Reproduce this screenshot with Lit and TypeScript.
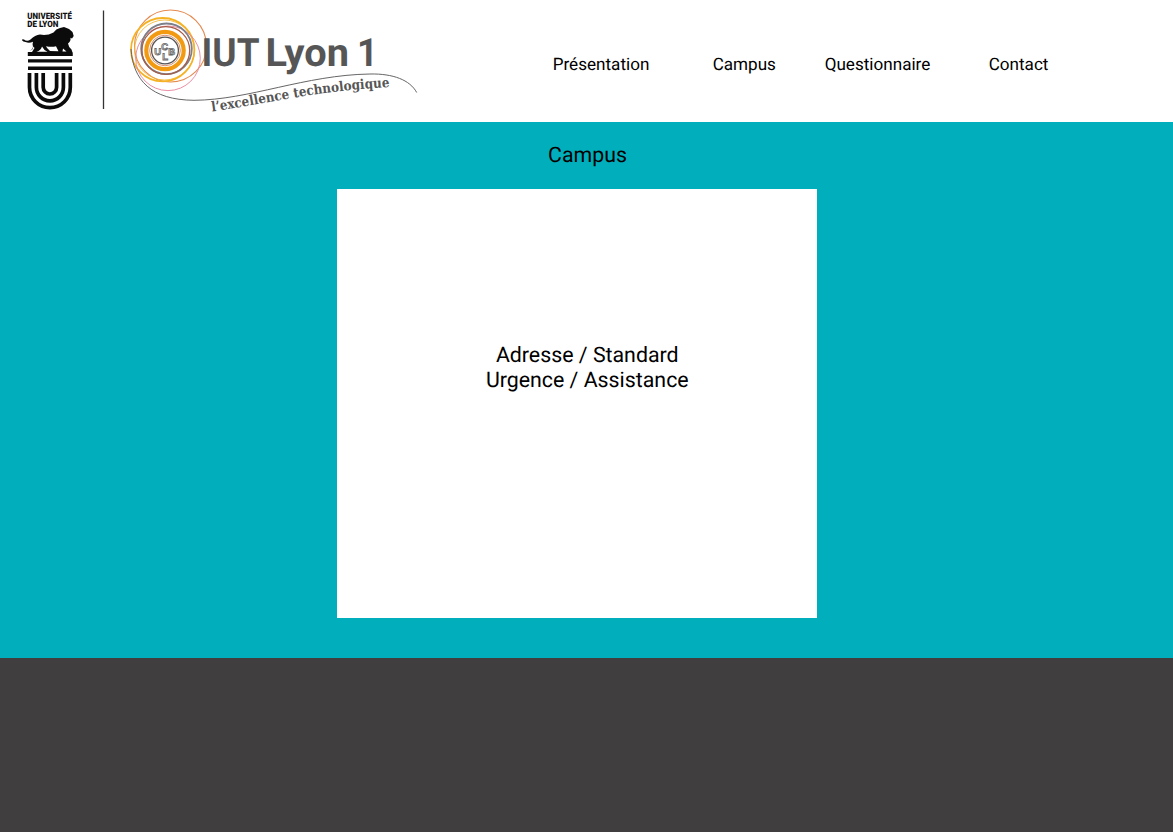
import { LitElement, html, css, svg } from "lit";
import { customElement } from "lit/decorators.js";

@customElement("iut-logo")
class IutLogo extends LitElement {
  static styles = css`
    :host { display: block; width: 430px; height: 121px; letter-spacing: 0; }
    svg { display: block; }
    .univ { font: 900 8.8px Roboto, sans-serif; fill: #111; }
    .name { font: 700 39px Roboto, sans-serif; fill: #565656; }
    .motto { font: 700 13.5px "DejaVu Serif", serif; font-stretch: condensed; fill: #565656; }
    .ring { fill: none; }
    .mono { font: 700 9.5px "Liberation Sans", sans-serif; fill: #fff; stroke: #666; stroke-width: 0.8; }
  `;

  render() {
    return html`<svg width="430" height="121" viewBox="0 0 430 121" role="img" aria-label="IUT Lyon 1">
      ${svg`
      <text class="univ" x="27.3" y="19" textLength="44.5" lengthAdjust="spacingAndGlyphs">UNIVERSITÉ</text>
      <text class="univ" x="27.3" y="27" textLength="31" lengthAdjust="spacingAndGlyphs">DE LYON</text>
      <path fill="#0b0b0b" d="M22 40.300Q22 38.500 24 39.500Q27 42 30.500 39.500Q35 35 40 34.600Q47 36 53.500 32.500Q56 28.800 60 28L64 27L69 29L72.500 32L73.700 36L72 38.500L70.500 37.800Q71 41.500 68 43.500Q68.500 47 71.500 49.500L72.500 52.500V56H27.800V52Q32 50.500 33 47Q32 44.500 33 41.800Q29 43.500 25.500 42Q23 41.700 22 40.300Z"/>
      <path fill="#fff" d="M27 51.500L31.500 50Q33 49 33.500 46.500L34.500 48L32 52H27Z M36.500 51.800Q41 50.500 42 46.500Q44 50.500 47.500 51.800Z M50 51Q46.500 48 46 46.200Q52 47.300 56 46.200L58.500 51.200 Z M62.500 51.500L63 48.500L66.500 51.500Z"/>
      <path fill="#0b0b0b" d="M28 52.500H72.500V56H28Z M28 59.300H72V62.600H28Z M28 66.500H72V69.900H28Z"/>
      <g fill="none" stroke="#0b0b0b" stroke-width="3.700">
        <path d="M29.500 73V87.300A20.400 20.400 0 0 0 70.300 87.300V73"/>
        <path d="M36.400 73V87.300A13.500 13.500 0 0 0 63.400 87.300V73"/>
        <path d="M43.200 73V87.300A6.700 6.700 0 0 0 56.600 87.300V73"/>
      </g>
      <path d="M103.500 10.500V109" stroke="#333" stroke-width="1.300"/>
      <g class="ring">
        <circle cx="170.500" cy="46" r="36" stroke="#e58a50" stroke-width="1.100"/>
        <circle cx="162.700" cy="49.700" r="31.700" stroke="#f5b324" stroke-width="1.800"/>
        <circle cx="164.500" cy="50" r="30" stroke="#f5b324" stroke-width="0.800"/>
        <circle cx="168" cy="58.300" r="32.300" stroke="#e8829c" stroke-width="0.900"/>
        <circle cx="166.500" cy="48.800" r="25.300" stroke="#7d8088" stroke-width="1.800"/>
        <circle cx="165.800" cy="50.500" r="23.900" stroke="#a85b46" stroke-width="1.300"/>
        <circle cx="165" cy="50.500" r="18.700" stroke="#f29a12" stroke-width="4.200"/>
        <circle cx="165" cy="50.500" r="15.300" stroke="#d6825c" stroke-width="0.900"/>
        <circle cx="165" cy="50.500" r="13.400" stroke="#555" stroke-width="1.300"/>
      </g>
      <text class="mono" x="154.200" y="54.500">U</text>
      <text class="mono" x="162.300" y="60">L</text>
      <text class="mono" x="161.200" y="50">C</text>
      <text class="mono" x="168.300" y="54.500">B</text>
      <path d="M131 49C133 80 151 100 194 100.300C249 100 305 75 370 74C393 73.500 410 80 416.700 92.500" fill="none" stroke="#666" stroke-width="1"/>
      <text class="name" x="201.500" y="66" textLength="58" lengthAdjust="spacingAndGlyphs">IUT</text>
      <text class="name" x="265.500" y="66" textLength="83.500" lengthAdjust="spacingAndGlyphs">Lyon</text>
      <text class="name" x="357" y="66" textLength="21" lengthAdjust="spacingAndGlyphs">1</text>
      <path id="motto" fill="none" d="M212 111.500C265 104 320 90 392 87"/>
      <text class="motto" textLength="179.500" lengthAdjust="spacingAndGlyphs"><textPath href="#motto">l’excellence technologique</textPath></text>
      `}
    </svg>`;
  }
}

@customElement("app-root")
class AppRoot extends LitElement {
  static styles = css`
    :host {
      display: flex; flex-direction: column; height: 832px; overflow: hidden;
      font-family: Roboto, sans-serif; color: #000; letter-spacing: 0; background: #403e3f;
      text-rendering: geometricPrecision;
    }
    header { display: flex; height: 121.500px; background: #fff; flex: none; }
    nav { display: flex; padding: 54.600px 0 0 122.700px; font-size: 17.100px; line-height: 20px; white-space: nowrap; }
    .item { color: inherit; text-decoration: none; }
    .presentation { width: 160px; }
    .campus { width: 112px; }
    .questionnaire { width: 164px; }
    main {
      display: flex; flex-direction: column; align-items: center; flex: none;
      height: 536.500px; background: #00afbb; font-size: 21.330px; line-height: 25px;
    }
    h1 { margin: 21.800px 0 20.400px; font: inherit; padding-left: 2px; }
    .card {
      box-sizing: border-box; width: 480px; height: 429.300px; margin-right: 18.500px;
      padding: 154.400px 0 0 20px; background: #fff; text-align: center;
    }
    .card p { margin: 0; }
    footer { flex: 1; background: #403e3f; }
  `;

  render() {
    return html`
      <header>
        <iut-logo></iut-logo>
        <nav>
          <a class="item presentation">Présentation</a>
          <a class="item campus">Campus</a>
          <a class="item questionnaire">Questionnaire</a>
          <a class="item">Contact</a>
        </nav>
      </header>
      <main>
        <h1>Campus</h1>
        <section class="card">
          <p>Adresse / Standard</p>
          <p>Urgence / Assistance</p>
        </section>
      </main>
      <footer></footer>
    `;
  }
}
